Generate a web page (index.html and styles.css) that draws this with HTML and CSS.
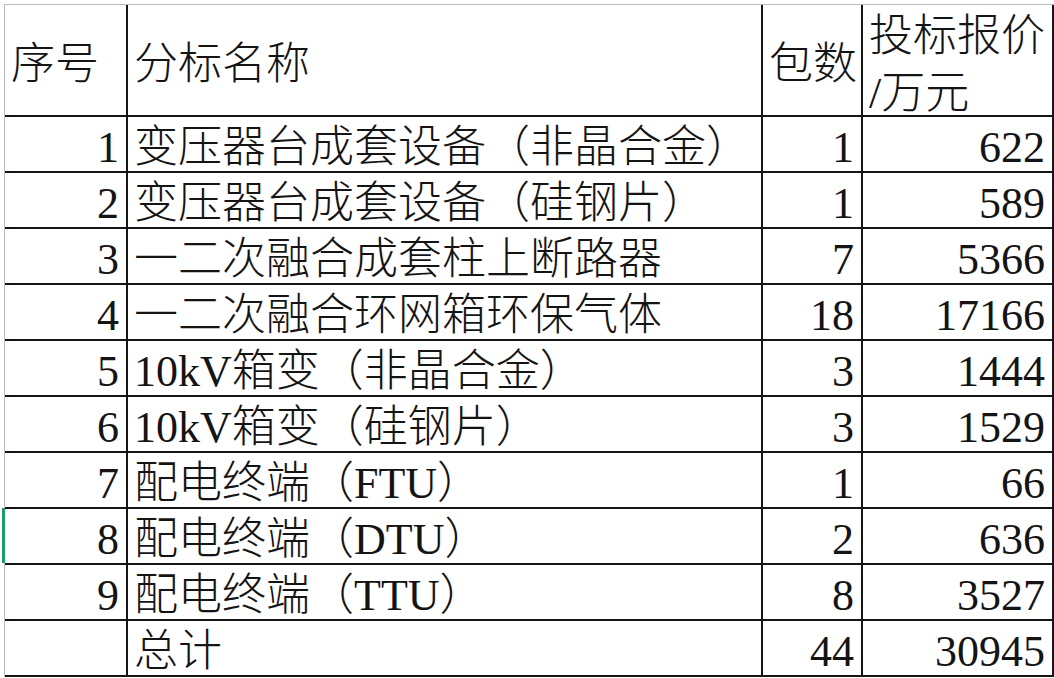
FILE: index.html
```html
<!DOCTYPE html>
<html lang="zh-CN">
<head>
<meta charset="utf-8">
<title>分标报价</title>
<link rel="stylesheet" href="styles.css">
</head>
<body>
<div class="sheet">
  <div class="grid">
    <div class="cell head">序号</div>
    <div class="cell head">分标名称</div>
    <div class="cell head">包数</div>
    <div class="cell head wrap">投标报价<br>/万元</div>

    <div class="cell num">1</div>
    <div class="cell txt">变压器台成套设备（非晶合金）</div>
    <div class="cell num">1</div>
    <div class="cell num">622</div>

    <div class="cell num">2</div>
    <div class="cell txt">变压器台成套设备（硅钢片）</div>
    <div class="cell num">1</div>
    <div class="cell num">589</div>

    <div class="cell num">3</div>
    <div class="cell txt">一二次融合成套柱上断路器</div>
    <div class="cell num">7</div>
    <div class="cell num">5366</div>

    <div class="cell num">4</div>
    <div class="cell txt">一二次融合环网箱环保气体</div>
    <div class="cell num">18</div>
    <div class="cell num">17166</div>

    <div class="cell num">5</div>
    <div class="cell txt">10kV箱变（非晶合金）</div>
    <div class="cell num">3</div>
    <div class="cell num">1444</div>

    <div class="cell num">6</div>
    <div class="cell txt">10kV箱变（硅钢片）</div>
    <div class="cell num">3</div>
    <div class="cell num">1529</div>

    <div class="cell num">7</div>
    <div class="cell txt">配电终端（FTU）</div>
    <div class="cell num">1</div>
    <div class="cell num">66</div>

    <div class="cell num selected">8</div>
    <div class="cell txt">配电终端（DTU）</div>
    <div class="cell num">2</div>
    <div class="cell num">636</div>

    <div class="cell num">9</div>
    <div class="cell txt">配电终端（TTU）</div>
    <div class="cell num">8</div>
    <div class="cell num">3527</div>

    <div class="cell num"></div>
    <div class="cell txt">总计</div>
    <div class="cell num">44</div>
    <div class="cell num">30945</div>
  </div>
</div>
</body>
</html>
```
FILE: styles.css
```css
html, body {
  margin: 0;
  padding: 0;
  background: #ffffff;
  overflow: hidden;
}

body {
  width: 1054px;
  height: 678px;
  font-family: "Liberation Serif", "Noto Sans CJK SC", serif;
  font-size: 44px;
  font-weight: 300;
  color: #141414;
}

.sheet {
  margin-top: 4px;
  margin-left: 4px;
  border-top: 1px solid #b9bcc0;
  border-left: 1px solid #b9bcc0;
}

.grid {
  display: grid;
  grid-template-columns: 123px 635px 100px 1fr;
  grid-template-rows: 112px repeat(10, 56px);
}

.cell {
  box-sizing: border-box;
  border-right: 2px solid #151515;
  border-bottom: 2px solid #151515;
  display: flex;
  padding: 0 7px 0 6px;
  white-space: nowrap;
  position: relative;
  line-height: 46px;
}

.head {
  align-items: center;
  line-height: 57px;
  padding-top: 8px;
}

.head.wrap {
  padding-top: 10px;
  padding-left: 6px;
}

.txt {
  align-items: flex-end;
  justify-content: flex-start;
}

.num {
  align-items: flex-end;
  justify-content: flex-end;
}

.selected::before {
  content: "";
  position: absolute;
  left: -3px;
  top: -1px;
  bottom: 0;
  width: 3px;
  background: #1e9e63;
}
```
